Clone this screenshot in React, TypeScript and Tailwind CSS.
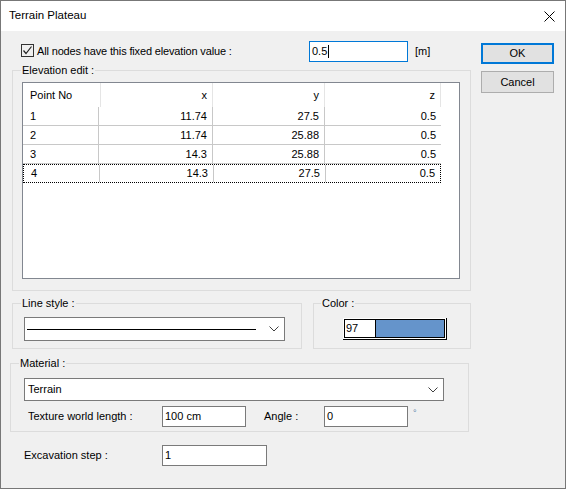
import React from 'react';

const font = { fontFamily: '"Liberation Sans", Arial, sans-serif' };

const rows = [
  { n: '1', x: '11.74', y: '27.5', z: '0.5' },
  { n: '2', x: '11.74', y: '25.88', z: '0.5' },
  { n: '3', x: '14.3', y: '25.88', z: '0.5' },
  { n: '4', x: '14.3', y: '27.5', z: '0.5' },
];

const Chevron: React.FC = () => (
  <svg width="10" height="6" viewBox="0 0 10 6" className="shrink-0">
    <path d="M0.5 0.5 L5 5 L9.5 0.5" fill="none" stroke="#404040" strokeWidth="1" />
  </svg>
);

// groupbox with the label sitting over its top border
const Group: React.FC<{ label: string; labelLeft: string; className: string; children?: React.ReactNode }> = ({
  label,
  labelLeft,
  className,
  children,
}) => (
  <div className={`relative border border-[#dcdcdc] ${className}`}>
    <span className={`absolute -top-[8px] ${labelLeft} bg-[#f0f0f0] px-[1px] text-[11px] leading-[14px] text-black`}>
      {label}
    </span>
    {children}
  </div>
);

const TextBox: React.FC<{ value: string; className: string }> = ({ value, className }) => (
  <div className={`flex items-center border border-[#7a7a7a] bg-white pl-[2px] text-[11px] text-black ${className}`}>
    {value}
  </div>
);

export default function App() {
  return (
    <div className="w-[566px] h-[489px] border border-[#777] bg-[#f0f0f0] flex flex-col overflow-hidden" style={font}>
      {/* title bar */}
      <div className="h-[30px] bg-white flex items-center justify-between pl-[8px] pr-[10px] shrink-0">
        <span className="text-[11.5px] text-black">Terrain Plateau</span>
        <svg width="11" height="11" viewBox="0 0 11 11">
          <path d="M0.5 0.5 L10.5 10.5 M10.5 0.5 L0.5 10.5" stroke="#000" strokeWidth="1" />
        </svg>
      </div>

      <div className="flex pl-[9px] pt-[10px]">
        {/* left column */}
        <div className="w-[461px] flex flex-col">
          {/* fixed elevation row */}
          <div className="flex items-center h-[21px]">
            <div className="w-[299px] flex items-center pl-[11px]">
              <div className="w-[13px] h-[13px] border border-[#333] bg-[#f0f0f0] flex items-center justify-center mt-[-2px]">
                <svg width="11" height="11" viewBox="0 0 11 11">
                  <path d="M1.5 5.5 L4 8.5 L9.5 1.5" fill="none" stroke="#222" strokeWidth="1.2" />
                </svg>
              </div>
              <span className="ml-[3px] text-[11px] tracking-[-0.15px] text-black">All nodes have this fixed elevation value :</span>
            </div>
            <div className="w-[99px] h-[21px] border border-[#0078d7] bg-white flex items-center pl-[2px] text-[11px] text-black">
              0.5<span className="w-[1px] h-[13px] bg-black ml-[1px]" />
            </div>
            <span className="ml-[7px] text-[11px] text-black">[m]</span>
          </div>

          {/* elevation edit */}
          <Group label="Elevation edit :" labelLeft="left-[8px]" className="mt-[8px] ml-[2px] w-[459px] h-[221px]">
            <div className="mt-[11px] ml-[9px] w-[438px] h-[197px] border border-[#828790] bg-white text-[11px] text-black">
              <div className="flex h-[24px]">
                <div className="w-[78px] border-r border-[#e5e5e5] flex items-center pl-[7px]">Point No</div>
                <div className="w-[112px] border-r border-[#e5e5e5] flex items-center justify-end pr-[5px]">x</div>
                <div className="w-[112px] border-r border-[#e5e5e5] flex items-center justify-end pr-[5px]">y</div>
                <div className="w-[116px] border-r border-[#e5e5e5] flex items-center justify-end pr-[5px]">z</div>
              </div>
              {rows.map((r, i) => (
                <div
                  key={r.n}
                  className={`flex w-[418px] h-[19px] ${
                    i === rows.length - 1 ? 'border border-dotted border-black' : 'border-b border-[#c8c8c8]'
                  }`}
                >
                  <div className="w-[76px] border-r border-[#c8c8c8] flex items-center pl-[7px]">{r.n}</div>
                  <div className="w-[114px] border-r border-[#c8c8c8] flex items-center justify-end pr-[5px]">{r.x}</div>
                  <div className="w-[112px] border-r border-[#c8c8c8] flex items-center justify-end pr-[5px]">{r.y}</div>
                  <div className="flex-1 flex items-center justify-end pr-[5px]">{r.z}</div>
                </div>
              ))}
            </div>
          </Group>

          {/* line style + color */}
          <div className="flex mt-[12px] ml-[2px] gap-[11px]">
            <Group label="Line style :" labelLeft="left-[8px]" className="w-[290px] h-[46px]">
              <div className="mt-[13px] ml-[11px] w-[261px] h-[24px] border border-[#7a7a7a] bg-white flex items-center pl-[2px] pr-[5px]">
                <div className="flex-1 h-[1px] bg-black mr-[13px]" />
                <Chevron />
              </div>
            </Group>
            <Group label="Color :" labelLeft="left-[7px]" className="w-[158px] h-[46px]">
              <div className="mt-[14px] ml-[29px] w-[104px] h-[22px] border-r border-b border-black">
                <div className="w-full h-full border border-white">
                  <div className="w-full h-full border border-black flex">
                    <div className="w-[31px] bg-white border-r border-black flex items-center pl-[1px] text-[11px] text-black">97</div>
                    <div className="flex-1 bg-[#6594cb]" />
                  </div>
                </div>
              </div>
            </Group>
          </div>

          {/* material */}
          <Group label="Material :" labelLeft="left-[8px]" className="mt-[14px] w-[459px] h-[69px]">
            <div className="mt-[14px] ml-[13px] w-[420px] h-[23px] border border-[#7a7a7a] bg-white flex items-center justify-between pl-[3px] pr-[5px] text-[11px] text-black">
              <span>Terrain</span>
              <Chevron />
            </div>
            <div className="flex items-center mt-[5px] h-[21px] text-[11px] text-black">
              <span className="w-[151px] pl-[17px]">Texture world length :</span>
              <TextBox value="100 cm" className="w-[84px] h-[21px]" />
              <span className="ml-[18px] w-[60px]">Angle :</span>
              <TextBox value="0" className="w-[84px] h-[21px]" />
              <span className="ml-[5px] self-start mt-[1px] text-[9px] text-[#5a7fa8]">°</span>
            </div>
          </Group>

          {/* excavation */}
          <div className="flex items-center mt-[13px] h-[21px] text-[11px] text-black">
            <span className="w-[152px] pl-[14px]">Excavation step :</span>
            <TextBox value="1" className="w-[105px] h-[21px]" />
          </div>
        </div>

        {/* buttons */}
        <div className="ml-[10px] flex flex-col w-[73px] pt-[2px]">
          <div className="h-[21px] border-2 border-[#0078d7] bg-[#e1e1e1] flex items-center justify-center text-[11px] text-black">OK</div>
          <div className="mt-[7px] h-[22px] border border-[#adadad] bg-[#e1e1e1] flex items-center justify-center text-[11px] text-black">Cancel</div>
        </div>
      </div>
    </div>
  );
}
